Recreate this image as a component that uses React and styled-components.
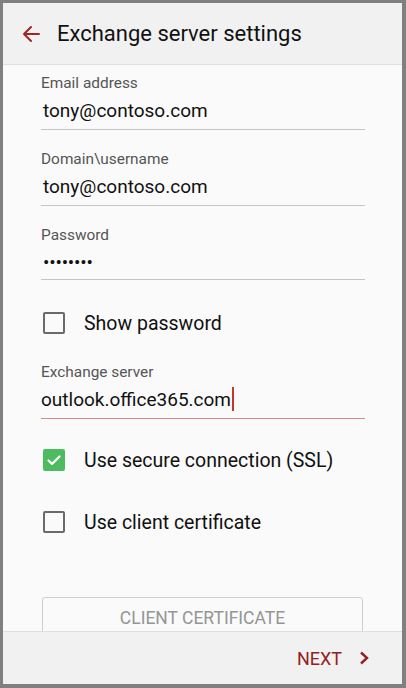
import React from "react"
import styled, { createGlobalStyle } from "styled-components"

const GlobalStyle = createGlobalStyle`
  html, body {
    margin: 0;
    padding: 0;
    background: #808080;
  }
  * {
    box-sizing: border-box;
  }
`

const Frame = styled.div`
  width: 406px;
  height: 688px;
  border-style: solid;
  border-color: #808080;
  border-width: 3px 4px 4px 3px;
  display: flex;
  flex-direction: column;
  background: #fafafa;
  font-family: Roboto, "Liberation Sans", sans-serif;
  overflow: hidden;
`

const Header = styled.header`
  height: 62px;
  flex: none;
  display: flex;
  align-items: center;
  gap: 16px;
  padding-left: 18px;
  background: #f1f1f1;
  border-bottom: 1px solid #e0e0e0;
`

const BackButton = styled.button`
  border: 0;
  padding: 0;
  background: none;
  display: flex;
  color: #a32424;
`

const Title = styled.h1`
  margin: 0;
  font-size: 22px;
  font-weight: 400;
  color: #111;
`

const Content = styled.main`
  flex: 1;
  min-height: 0;
  overflow: hidden;
  padding: 9px 37px 0 38px;
  display: flex;
  flex-direction: column;
`

const Field = styled.div`
  flex: none;
  margin-top: ${(p) => p.$top || 0}px;
`

const Label = styled.div`
  font-size: 15.4px;
  line-height: 18px;
  color: #555;
`

const Value = styled.div`
  margin-top: 6px;
  padding: 0 0 5px ${(p) => (p.$flush ? 0 : 2)}px;
  font-size: 19px;
  line-height: 26px;
  height: ${(p) => (p.$compact ? 30 : 32)}px;
  color: #111;
  border-bottom: 1px solid ${(p) => (p.$active ? "#d98a82" : "#c4c4c4")};
`

const Dots = styled.span`
  font-size: 19px;
  letter-spacing: -0.2px;
`

const Caret = styled.span`
  display: inline-block;
  width: 1.5px;
  height: 24px;
  margin-left: 1px;
  vertical-align: -5px;
  background: #c0392b;
`

const CheckRow = styled.label`
  flex: none;
  margin-top: ${(p) => p.$top || 0}px;
  height: 44px;
  display: flex;
  align-items: center;
  gap: 19px;
  padding-left: 2px;
  font-size: 19.5px;
  color: #111;
`

const Box = styled.span`
  width: 22px;
  height: 22px;
  flex: none;
  border-radius: 2px;
  display: flex;
  align-items: center;
  justify-content: center;
  border: 2px solid ${(p) => (p.$checked ? "#4dbb5f" : "#6a6a6a")};
  background: ${(p) => (p.$checked ? "#4dbb5f" : "transparent")};
`

const OutlineButton = styled.button`
  margin-top: 53px;
  margin-left: 1px;
  width: 321px;
  height: 42px;
  flex: none;
  border: 1px solid #cfcfcf;
  border-radius: 3px;
  background: #fafafa;
  font-family: inherit;
  font-size: 17.5px;
  color: #959595;
`

const Footer = styled.footer`
  height: 53px;
  flex: none;
  display: flex;
  align-items: center;
  justify-content: flex-end;
  padding-right: 32px;
  background: #f1f1f1;
  border-top: 1px solid #dedede;
  position: relative;
  z-index: 1;
`

const NextButton = styled.button`
  border: 0;
  background: none;
  padding: 0;
  display: flex;
  align-items: center;
  gap: 16px;
  font-family: inherit;
  font-size: 18px;
  color: #952020;
`

const Check = () => (
  <svg width="16" height="16" viewBox="0 0 16 16">
    <path d="M2.5 8.5l3.6 3.4L13.5 4.5" fill="none" stroke="#fff" strokeWidth="2.2" strokeLinecap="round" strokeLinejoin="round" />
  </svg>
)

const CheckBox = ({ checked, label, top }) => (
  <CheckRow $top={top}>
    <Box $checked={checked}>{checked && <Check />}</Box>
    {label}
  </CheckRow>
)

export default function App() {
  return (
    <>
      <GlobalStyle />
      <Frame>
        <Header>
          <BackButton aria-label="Back">
            <svg width="20" height="20" viewBox="0 0 20 20">
              <path d="M18 10H3M10 3l-7 7 7 7" fill="none" stroke="currentColor" strokeWidth="2" strokeLinecap="round" strokeLinejoin="round" />
            </svg>
          </BackButton>
          <Title>Exchange server settings</Title>
        </Header>
        <Content>
          <Field>
            <Label>Email address</Label>
            <Value>tony@contoso.com</Value>
          </Field>
          <Field $top={20}>
            <Label>Domain\username</Label>
            <Value>tony@contoso.com</Value>
          </Field>
          <Field $top={20}>
            <Label>Password</Label>
            <Value $compact><Dots>••••••••</Dots></Value>
          </Field>
          <CheckBox label="Show password" top={21} />
          <Field $top={18}>
            <Label>Exchange server</Label>
            <Value $flush $active>outlook.office365.com<Caret /></Value>
          </Field>
          <CheckBox checked label="Use secure connection (SSL)" top={19} />
          <CheckBox label="Use client certificate" top={18} />
          <OutlineButton>CLIENT CERTIFICATE</OutlineButton>
        </Content>
        <Footer>
          <NextButton>
            NEXT
            <svg width="12" height="14" viewBox="0 0 12 14">
              <path d="M3 1.5l6 5.5-6 5.5" fill="none" stroke="currentColor" strokeWidth="2.4" />
            </svg>
          </NextButton>
        </Footer>
      </Frame>
    </>
  )
}
